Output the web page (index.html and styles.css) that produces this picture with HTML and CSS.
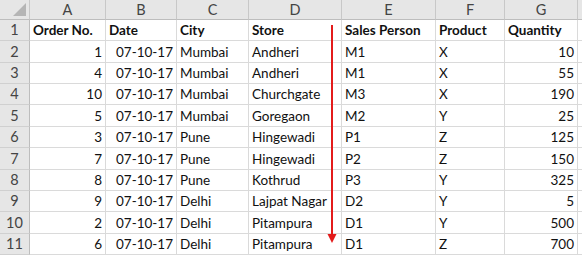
FILE: index.html
```html
<!DOCTYPE html>
<html>
<head>
<meta charset="utf-8">
<link rel="stylesheet" href="styles.css">
</head>
<body>
<div class="sheet">
  <div class="grid">
    <div class="ch corner"><span class="tri"></span></div>
    <div class="ch">A</div><div class="ch">B</div><div class="ch">C</div><div class="ch">D</div><div class="ch">E</div><div class="ch">F</div><div class="ch">G</div><div class="ch"></div>

    <div class="rh">1</div><div class="c b">Order No.</div><div class="c b">Date</div><div class="c b">City</div><div class="c b">Store</div><div class="c b">Sales Person</div><div class="c b">Product</div><div class="c b">Quantity</div><div class="c"></div>

    <div class="rh">2</div><div class="c n">1</div><div class="c n">07-10-17</div><div class="c">Mumbai</div><div class="c">Andheri</div><div class="c">M1</div><div class="c">X</div><div class="c n">10</div><div class="c"></div>
    <div class="rh">3</div><div class="c n">4</div><div class="c n">07-10-17</div><div class="c">Mumbai</div><div class="c">Andheri</div><div class="c">M1</div><div class="c">X</div><div class="c n">55</div><div class="c"></div>
    <div class="rh">4</div><div class="c n">10</div><div class="c n">07-10-17</div><div class="c">Mumbai</div><div class="c">Churchgate</div><div class="c">M3</div><div class="c">X</div><div class="c n">190</div><div class="c"></div>
    <div class="rh">5</div><div class="c n">5</div><div class="c n">07-10-17</div><div class="c">Mumbai</div><div class="c">Goregaon</div><div class="c">M2</div><div class="c">Y</div><div class="c n">25</div><div class="c"></div>
    <div class="rh">6</div><div class="c n">3</div><div class="c n">07-10-17</div><div class="c">Pune</div><div class="c">Hingewadi</div><div class="c">P1</div><div class="c">Z</div><div class="c n">125</div><div class="c"></div>
    <div class="rh">7</div><div class="c n">7</div><div class="c n">07-10-17</div><div class="c">Pune</div><div class="c">Hingewadi</div><div class="c">P2</div><div class="c">Z</div><div class="c n">150</div><div class="c"></div>
    <div class="rh">8</div><div class="c n">8</div><div class="c n">07-10-17</div><div class="c">Pune</div><div class="c">Kothrud</div><div class="c">P3</div><div class="c">Y</div><div class="c n">325</div><div class="c"></div>
    <div class="rh">9</div><div class="c n">9</div><div class="c n">07-10-17</div><div class="c">Delhi</div><div class="c">Lajpat Nagar</div><div class="c">D2</div><div class="c">Y</div><div class="c n">5</div><div class="c"></div>
    <div class="rh">10</div><div class="c n">2</div><div class="c n">07-10-17</div><div class="c">Delhi</div><div class="c">Pitampura</div><div class="c">D1</div><div class="c">Y</div><div class="c n">500</div><div class="c"></div>
    <div class="rh">11</div><div class="c n">6</div><div class="c n">07-10-17</div><div class="c">Delhi</div><div class="c">Pitampura</div><div class="c">D1</div><div class="c">Z</div><div class="c n">700</div><div class="c"></div>
  </div>
  <svg class="arrow" width="12" height="222" viewBox="0 0 12 222">
    <rect x="5" y="0" width="2" height="212" fill="#e31b1b"/>
    <polygon points="1.5,209 10.5,209 6,218" fill="#e31b1b"/>
  </svg>
</div>
</body>
</html>
```

FILE: styles.css
```css
html, body {
  margin: 0;
  padding: 0;
  background: #ffffff;
}
.sheet {
  position: relative;
  width: 582px;
  height: 257px;
  overflow: hidden;
}
.grid {
  display: grid;
  grid-template-columns: 30px 76px 71px 72px 93px 94px 69px 73px 30px;
  grid-template-rows: 20px repeat(11, 21.36px);
  font-family: Lato, "Liberation Sans", sans-serif;
}
.ch {
  background: #e6e6e6;
  color: #444444;
  font-size: 14.5px;
  text-align: center;
  line-height: 20px;
  border-right: 1px solid #c8c8c8;
  border-bottom: 1px solid #bdbdbd;
  box-sizing: border-box;
}
.corner {
  position: relative;
}
.tri {
  position: absolute;
  right: 3px;
  bottom: 3px;
  width: 0;
  height: 0;
  border-left: 13px solid transparent;
  border-bottom: 13px solid #b5b5b5;
}
.rh {
  background: #e6e6e6;
  color: #444444;
  font-size: 14.5px;
  text-align: center;
  display: flex;
  align-items: flex-end;
  justify-content: center;
  padding-bottom: 2px;
  border-right: 1px solid #bdbdbd;
  border-bottom: 1px solid #d0d0d0;
  box-sizing: border-box;
}
.c {
  color: #111111;
  font-size: 13.5px;
  display: flex;
  align-items: flex-end;
  padding: 0 3px 2px 3px;
  border-right: 1px solid #dadada;
  border-bottom: 1px solid #dadada;
  box-sizing: border-box;
  white-space: nowrap;
  overflow: visible;
}
.b {
  font-weight: bold;
}
.n {
  justify-content: flex-end;
}
.arrow {
  position: absolute;
  left: 326px;
  top: 25px;
}
```
